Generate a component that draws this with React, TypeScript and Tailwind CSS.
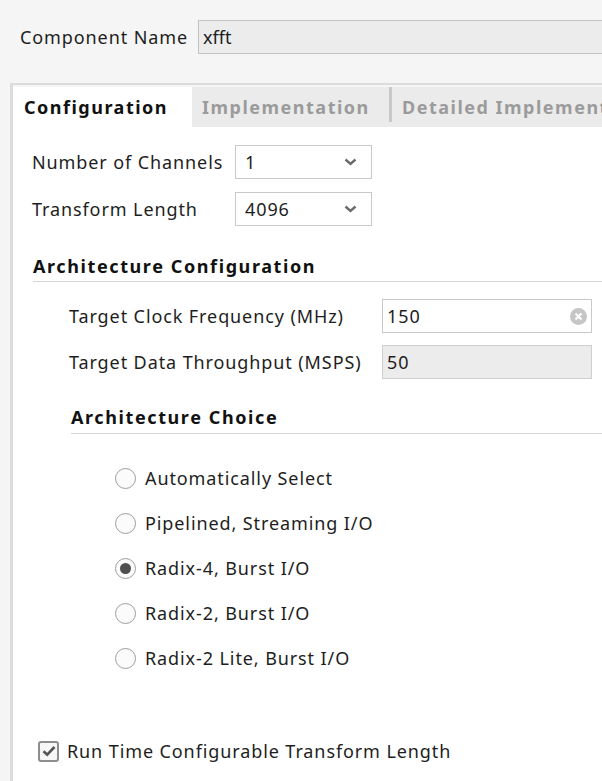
import { useState } from 'react'

const opciones = [
  'Automatically Select',
  'Pipelined, Streaming I/O',
  'Radix-4, Burst I/O',
  'Radix-2, Burst I/O',
  'Radix-2 Lite, Burst I/O',
]

function Chevron() {
  return (
    <svg width="13" height="8" viewBox="0 0 13 8" className="shrink-0">
      <path d="M1.5 1.5 L6.5 6 L11.5 1.5" fill="none" stroke="#6b6b6b" strokeWidth="2.4" />
    </svg>
  )
}

function Select({ value }: { value: string }) {
  return (
    <div className="w-[137px] h-[34px] bg-white border border-[#c9c9c9] flex items-center justify-between pl-[9px] pr-[14px]">
      <span>{value}</span>
      <Chevron />
    </div>
  )
}

export default function App() {
  const [arq, setArq] = useState(2)

  return (
    <div className="w-[602px] h-[781px] overflow-hidden bg-[#f5f5f5] text-[#1e1e1e] text-[18px] leading-[24px] tracking-[0.9px] font-['Noto_Sans',sans-serif]">
      {/* Component name */}
      <div className="flex items-center pt-[20px] pl-[20px]">
        <span className="w-[178px] shrink-0">Component Name</span>
        <div className="flex-1 h-[34px] -mr-[10px] bg-[#ececec] border border-[#c4c4c4] flex items-center pl-[4px] tracking-normal">
          xfft
        </div>
      </div>

      {/* Panel */}
      <div className="mt-[29px] ml-[10px] border-t-2 border-l-[3px] border-[#dcdcdc] h-[700px] flex flex-col">
        {/* Tabs */}
        <div className="mt-[2px] flex h-[40px] font-bold tracking-[1.5px] whitespace-nowrap overflow-hidden">
          <div className="w-[179px] shrink-0 bg-white pl-[11px] flex items-center text-[#111]">Configuration</div>
          <div className="w-[197px] shrink-0 bg-[#ebebeb] pl-[10px] flex items-center text-[#9b9b9b]">Implementation</div>
          <div className="flex-1 min-w-0 bg-[#ebebeb] flex items-start">
            <div className="w-[3px] h-[35px] shrink-0 bg-[#c8c8c8]" />
            <span className="pl-[10px] h-[40px] flex items-center text-[#9b9b9b]">Detailed Implementation</span>
          </div>
        </div>

        {/* Content */}
        <div className="flex-1 bg-white pt-[18px]">
          <div className="pl-[19px] flex flex-col gap-[13px]">
            <div className="flex items-center">
              <span className="w-[203px]">Number of Channels</span>
              <Select value="1" />
            </div>
            <div className="flex items-center">
              <span className="w-[203px]">Transform Length</span>
              <Select value="4096" />
            </div>
          </div>

          {/* Architecture Configuration */}
          <div className="mt-[28px] ml-[20px] pb-[3px] border-b border-[#d6d6d6] font-bold tracking-[1.6px] text-[#111]">
            Architecture Configuration
          </div>

          <div className="mt-[17px] pl-[56px] flex flex-col gap-[12px]">
            <div className="flex items-center">
              <span className="w-[313px]">Target Clock Frequency (MHz)</span>
              <div className="w-[210px] h-[34px] bg-white border border-[#c9c9c9] flex items-center justify-between pl-[4px] pr-[4px]">
                <span>150</span>
                <svg width="17" height="17" viewBox="0 0 16 16">
                  <circle cx="8" cy="8" r="8" fill="#c6c6c6" />
                  <path d="M5.2 5.2 L10.8 10.8 M10.8 5.2 L5.2 10.8" stroke="#fff" strokeWidth="2" />
                </svg>
              </div>
            </div>
            <div className="flex items-center">
              <span className="w-[313px]">Target Data Throughput (MSPS)</span>
              <div className="w-[210px] h-[34px] bg-[#ececec] border border-[#cfcfcf] flex items-center pl-[4px]">
                50
              </div>
            </div>
          </div>

          {/* Architecture Choice */}
          <div className="mt-[26px] ml-[58px] pb-[4px] border-b border-[#d6d6d6] font-bold tracking-[1.6px] text-[#111]">
            Architecture Choice
          </div>

          <div className="mt-[32px] pl-[102px] flex flex-col gap-[21px]">
            {opciones.map((o, i) => (
              <label key={o} className="flex items-center gap-[9px] h-[24px] cursor-pointer" onClick={() => setArq(i)}>
                <span className="w-[21px] h-[21px] rounded-full border-[1.5px] border-[#9d9d9d] bg-[#fbfbfb] flex items-center justify-center">
                  {arq === i && <span className="w-[11px] h-[11px] rounded-full bg-[#4f4f4f]" />}
                </span>
                <span>{o}</span>
              </label>
            ))}
          </div>

          {/* Checkbox */}
          <div className="mt-[69px] pl-[25px] flex items-center gap-[8px] h-[24px]">
            <span className="w-[21px] h-[21px] rounded-[3px] border-2 border-[#8d8d8d] bg-[#f6f6f6] flex items-center justify-center">
              <svg width="14" height="12" viewBox="0 0 14 12">
                <path d="M1.5 6.2 L5.2 9.6 L12.5 2" fill="none" stroke="#555" strokeWidth="2.6" />
              </svg>
            </span>
            <span>Run Time Configurable Transform Length</span>
          </div>
        </div>
      </div>
    </div>
  )
}
